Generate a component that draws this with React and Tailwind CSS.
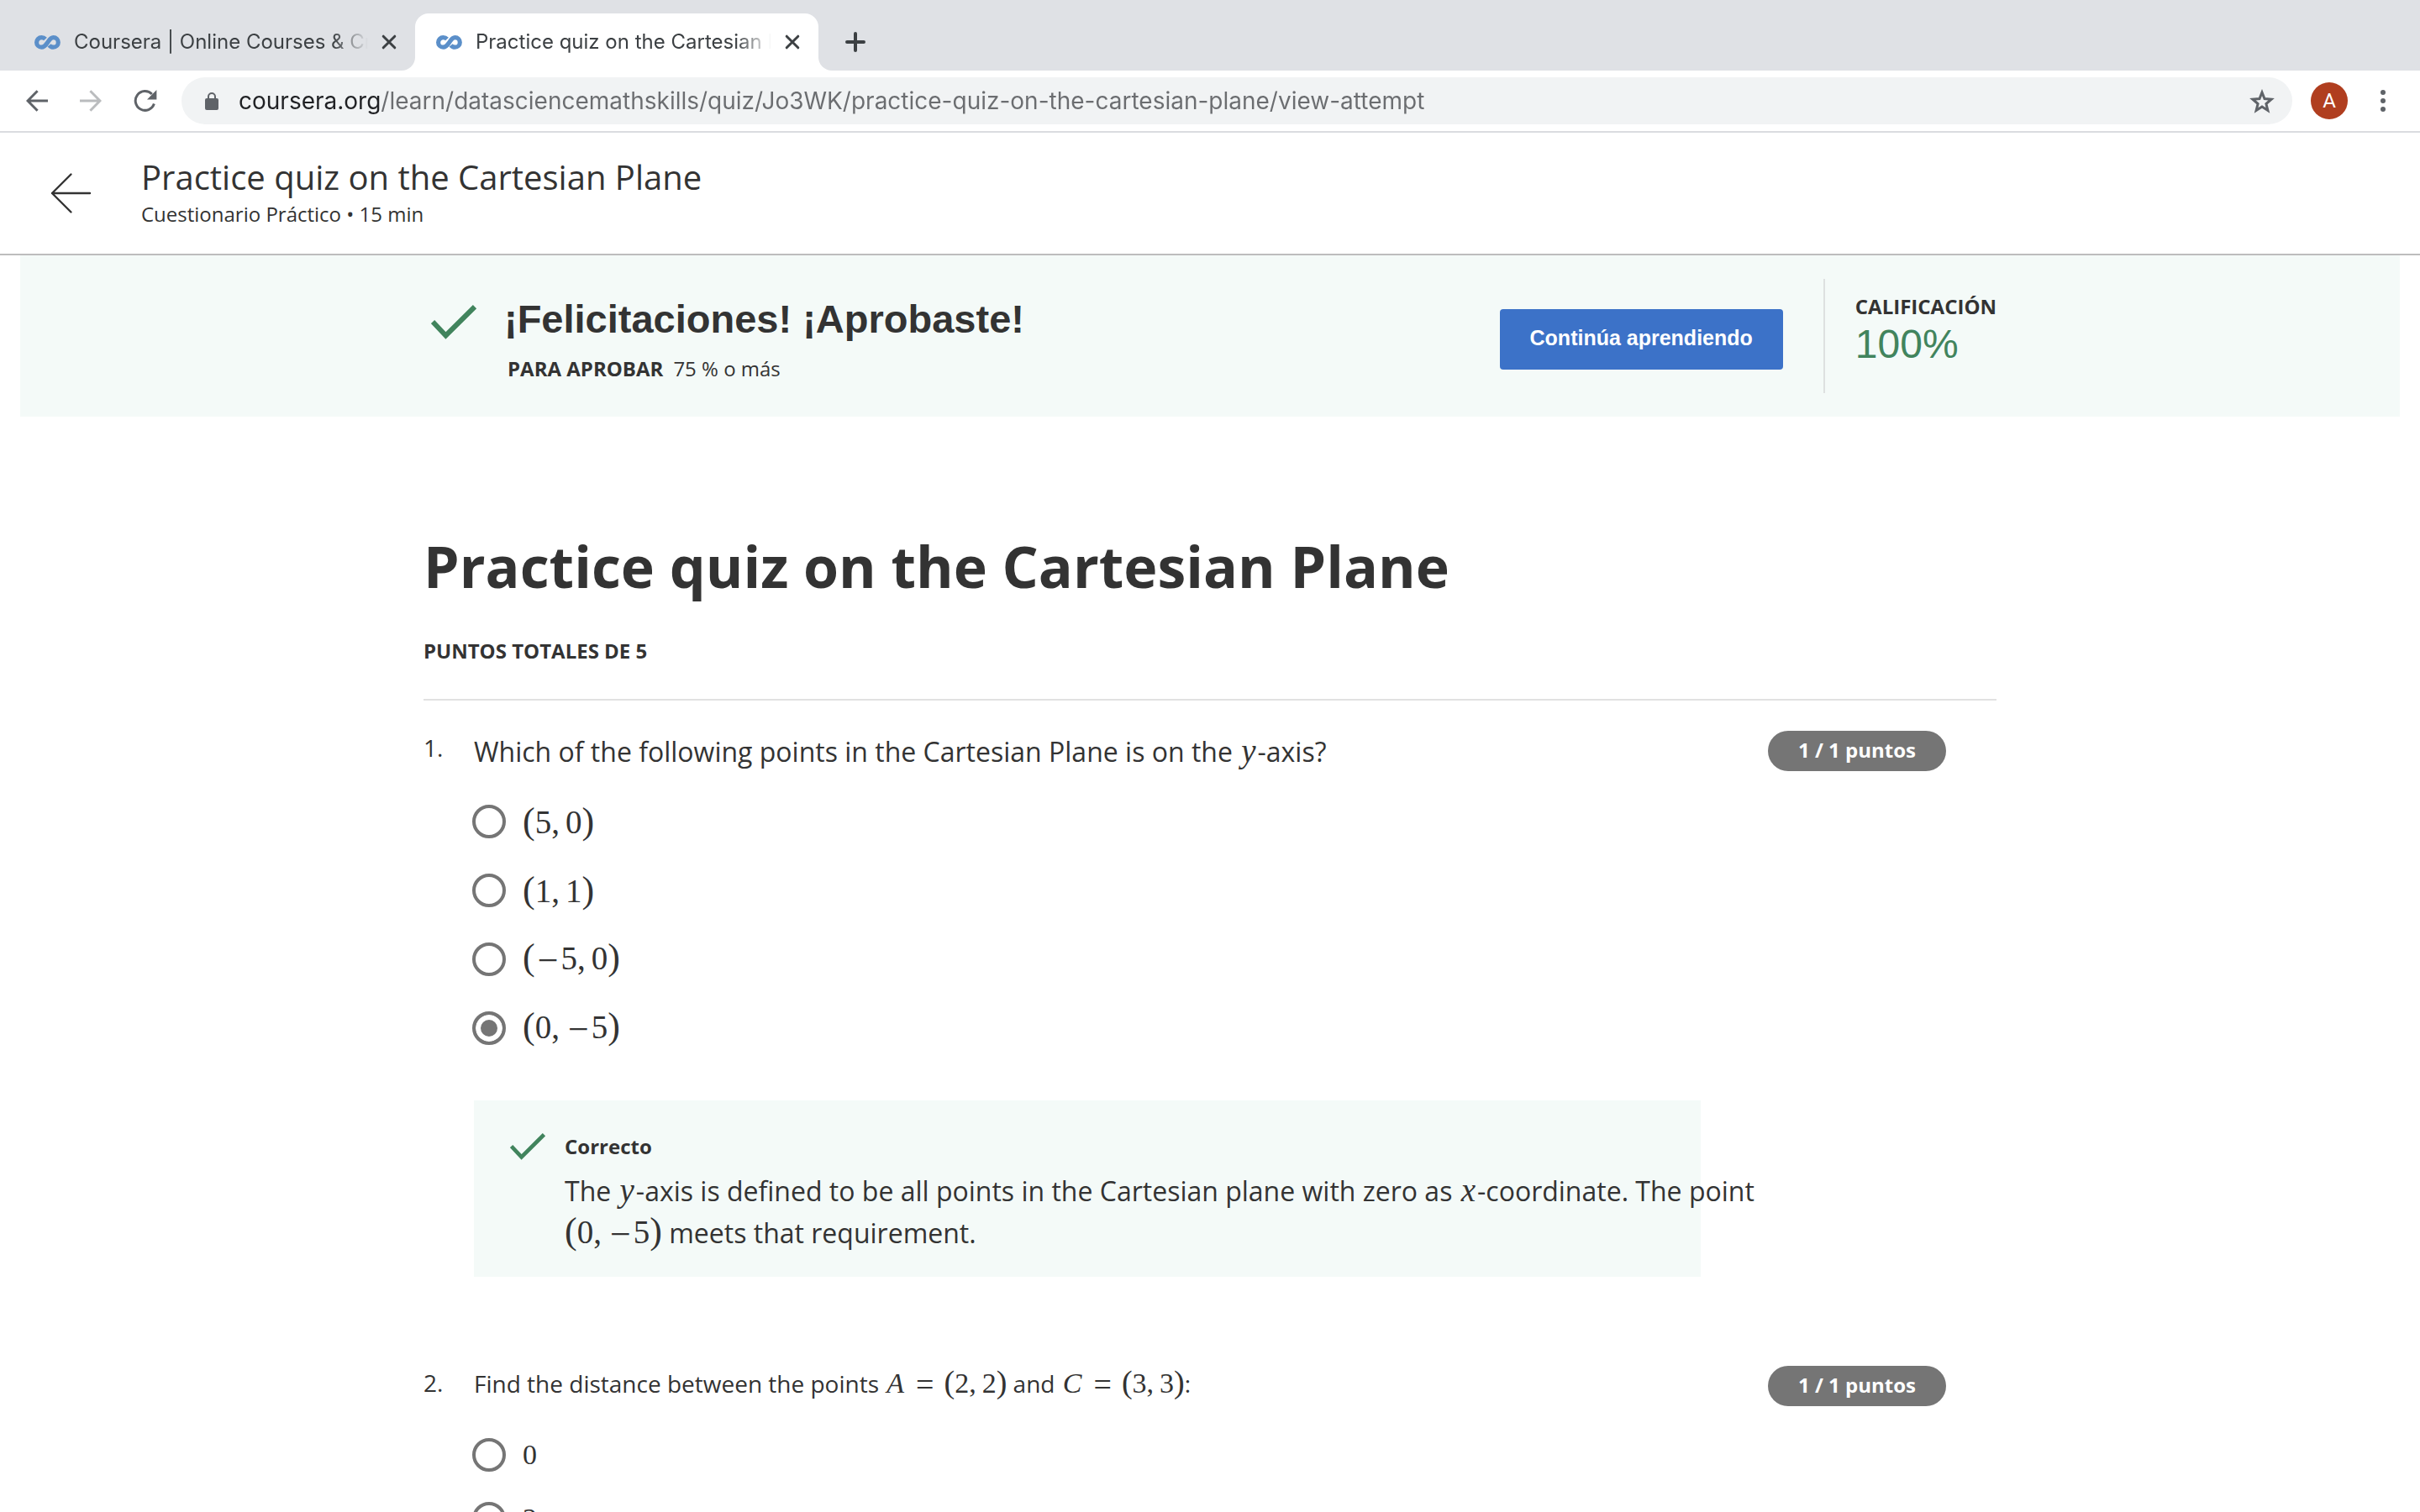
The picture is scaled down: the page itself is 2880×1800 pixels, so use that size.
import React from "react";

const svgProps = { fill: "none", stroke: "currentColor", "aria-hidden": true };

function CourseraMark() {
  return (
    <svg {...svgProps} viewBox="0 0 31 17" className="h-[17px] w-[31px] shrink-0 text-[#5b8fc9]" strokeWidth="5.2">
      <path d="M13 4.4C11.8 3.1 10.2 2.6 8.400 2.6a5.800 5.800 0 0 0 0 11.600c3.400 0 5-2.200 7.100-5.400S19 2.600 22.500 2.600a5.800 5.800 0 0 1 0 11.600c-2 0-3.700-.9-4.900-2.400" />
    </svg>
  );
}

function CloseIcon() {
  return (
    <svg {...svgProps} viewBox="0 0 18 18" className="size-[18px]" strokeWidth="3" strokeLinecap="round">
      <path d="M2.2 2.2l13.6 13.6M15.8 2.2L2.2 15.8" />
    </svg>
  );
}

function ArrowIcon({ className = "" }) {
  return (
    <svg {...svgProps} viewBox="0 0 26 26" className={`size-[26px] ${className}`} strokeWidth="3">
      <path d="M26 13H2.5M13.6 1.2L2 13l11.6 11.8" />
    </svg>
  );
}

function ReloadIcon() {
  return (
    <svg viewBox="0 0 28 26" className="h-[26px] w-[28px]" fill="none" aria-hidden="true">
      <path d="M21.8 5A11.4 11.4 0 1 0 24.4 16.6" stroke="currentColor" strokeWidth="3" />
      <path d="M27.4 0v11.4H16z" fill="currentColor" />
    </svg>
  );
}

function LockIcon() {
  return (
    <svg viewBox="0 0 16 21" className="h-[21px] w-[16px] shrink-0 text-[#5f6368]" fill="none" aria-hidden="true">
      <rect y="7" width="16" height="14" rx="2" fill="currentColor" />
      <path d="M4 8V5a4 4 0 0 1 8 0v3" stroke="currentColor" strokeWidth="2" />
    </svg>
  );
}

function StarIcon() {
  return (
    <svg {...svgProps} viewBox="0 0 30 29" className="h-[29px] w-[30px]" strokeWidth="3">
      <path d="M15 4l3 7.6 8.1.6-6.2 5.3 2 7.9L15 21.1l-6.9 4.3 2-7.9-6.2-5.3 8.1-.6z" />
    </svg>
  );
}

function CheckIcon({ className }) {
  return (
    <svg {...svgProps} viewBox="0 0 54 41" className={`shrink-0 text-[#41845d] ${className}`} strokeWidth="6">
      <path d="M2 20l15.5 16.5L52 2.2" />
    </svg>
  );
}

function Tab({ title }) {
  return (
    <div className="flex h-full w-full items-center pr-[22px] text-2xl leading-8">
      <CourseraMark />
      <span className="ml-4 min-w-0 flex-1 overflow-hidden whitespace-nowrap text-[#3c4043] [mask-image:linear-gradient(to_right,black_88%,transparent)]">
        {title}
      </span>
      <button aria-label={`Close ${title}`} className="ml-4 shrink-0 text-[#3c4043]">
        <CloseIcon />
      </button>
    </div>
  );
}

function Browser() {
  return (
    <header className="shrink-0 border-b-2 border-[#dadce0] bg-white font-['Inter',sans-serif]">
      <div className="flex h-[84px]">
        <div className="w-[494px] rounded-br-2xl bg-[#dfe1e5] pt-4 pl-[41px]">
          <Tab title="Coursera | Online Courses & Cr" />
        </div>
        <div className="w-[480px] bg-[#dfe1e5] pt-4">
          <div className="h-full rounded-t-2xl bg-white pl-[25px]">
            <Tab title="Practice quiz on the Cartesian Plane" />
          </div>
        </div>
        <div className="flex flex-1 items-center rounded-bl-2xl bg-[#dfe1e5] pt-4 pl-8">
          <button aria-label="New tab" className="text-[#3c4043]">
            <svg {...svgProps} viewBox="0 0 24 24" className="size-6" strokeWidth="4" strokeLinecap="round">
              <path d="M12 2v20M2 12h20" />
            </svg>
          </button>
        </div>
      </div>
      <div className="flex h-[72px] items-center pr-[41px] pl-[31px]">
        <button aria-label="Back" className="mr-[38px] text-[#5f6368]">
          <ArrowIcon />
        </button>
        <button aria-label="Forward" className="mr-[38px] text-[#babcbe]">
          <ArrowIcon className="rotate-180" />
        </button>
        <button aria-label="Reload" className="mr-[29px] text-[#5f6368]">
          <ReloadIcon />
        </button>
        <div className="flex h-14 flex-1 items-center rounded-full bg-[#f1f3f4] pr-[21px] pl-7">
          <LockIcon />
          <input
            aria-label="Address"
            defaultValue="coursera.org/learn/datasciencemathskills/quiz/Jo3WK/practice-quiz-on-the-cartesian-plane/view-attempt"
            className="ml-6 h-10 flex-1 bg-linear-[to_right,#202124_168px,#6b6d70_168px] bg-clip-text text-[28px] text-transparent outline-none"
          />
          <button aria-label="Bookmark this page" className="text-[#5f6368]">
            <StarIcon />
          </button>
        </div>
        <button
          aria-label="Profile"
          className="ml-[22px] size-11 rounded-full bg-[#b03e1f] font-['Roboto',sans-serif] text-2xl text-white"
        >
          A
        </button>
        <button aria-label="Menu" className="ml-[39px] text-[#5f6368]">
          <svg viewBox="0 0 6 26" className="h-[26px] w-[6px]" fill="currentColor" aria-hidden="true">
            <circle cx="3" cy="3" r="3" />
            <circle cx="3" cy="13" r="3" />
            <circle cx="3" cy="23" r="3" />
          </svg>
        </button>
      </div>
    </header>
  );
}

/* Inline maths: letters are italic, commas carry a thin space, operators sit on the maths axis and, like brackets, are drawn larger. */
function Math({ children, className = "text-[39px]", big = "text-[44px]" }) {
  return (
    <span className={`font-['Liberation_Serif',serif] leading-none whitespace-nowrap ${className}`}>
      {children.split("").map((c, i) => {
        if (c === ",") return <span key={i} className="mr-[7px]">,</span>;
        if (c === "−") return <span key={i} className={`mx-[3px] align-[-0.08em] leading-none ${big}`}>−</span>;
        if (c === "=") return <span key={i} className={`mx-3 align-[-0.08em] leading-none ${big}`}>=</span>;
        if (c === "(" || c === ")") return <span key={i} className={`leading-none ${big}`}>{c}</span>;
        if (/[A-Z]/.test(c)) return <i key={i} className="mx-0.5">{c}</i>;
        if (/[a-z]/.test(c)) return <i key={i} className="mx-0.5">{c}</i>;
        return c;
      })}
    </span>
  );
}

function Small({ children }) {
  return (
    <Math className="text-[34px]" big="text-[38px]">
      {children}
    </Math>
  );
}

function Option({ name, checked, children }) {
  return (
    <label className="flex h-10 items-center gap-5">
      <input
        type="radio"
        name={name}
        defaultChecked={checked}
        className="size-10 shrink-0 appearance-none rounded-full border-4 border-[#757575] bg-white checked:bg-[#757575] checked:shadow-[inset_0_0_0_6px_white]"
      />
      {children}
    </label>
  );
}

function Points() {
  return (
    <span className="mr-[60px] flex h-12 w-[212px] shrink-0 items-center justify-center rounded-full bg-[#757575] pb-0.5 text-2xl font-bold text-white">
      1 / 1 puntos
    </span>
  );
}

export default function App() {
  return (
    <div className="flex h-screen flex-col overflow-hidden bg-white font-['Open_Sans',sans-serif] text-[#333]">
      <Browser />

      <header className="flex h-[146px] shrink-0 items-center border-b-2 border-[#bdbdbd] pl-[60px]">
        <a href="#" aria-label="Volver" className="mr-[58px]">
          <svg {...svgProps} viewBox="0 0 50 50" className="size-[50px]" strokeWidth="2.4" strokeLinecap="round" strokeLinejoin="round">
            <path d="M47 25H2M24.5 2.5L2 25l22.500 22.500" />
          </svg>
        </a>
        <div className="pb-0.5">
          <p className="text-[40px] leading-[48px]">Practice quiz on the Cartesian Plane</p>
          <p className="mt-1 text-2xl leading-8">Cuestionario Práctico • 15 min</p>
        </div>
      </header>

      <main className="min-h-0 flex-1 overflow-hidden">
        <section className="mx-6 h-48 bg-[#f4faf8]">
          <div className="mx-auto flex h-full max-w-[1872px]">
            <CheckIcon className="mt-[59px] ml-[9px] h-[41px] w-[54px]" />
            <div className="ml-[33px] flex-1 pt-12">
              <h2 className="font-['Liberation_Sans',sans-serif] text-[47px] leading-[56px] font-bold">¡Felicitaciones! ¡Aprobaste!</h2>
              <p className="mt-[15px] pl-1 text-2xl leading-8">
                <b className="mr-3">PARA APROBAR</b>75 % o más
              </p>
            </div>
            <button className="mt-16 h-[72px] rounded-sm bg-[#3c72c8] px-9 pb-0.5 font-['Liberation_Sans',sans-serif] text-[25px] font-bold text-white">
              Continúa aprendiendo
            </button>
            <div className="mt-7 ml-12 h-[136px] border-l-2 border-[#dde1e0] pt-[17px] pl-9">
              <p className="text-2xl leading-8 font-bold">CALIFICACIÓN</p>
              <p className="font-['Liberation_Sans',sans-serif] text-5xl leading-[58px] text-[#41845d]">100%</p>
            </div>
          </div>
        </section>

        <div className="mx-auto max-w-[1872px] pt-[130px]">
          <h1 className="text-[68px] leading-[96px] font-bold">Practice quiz on the Cartesian Plane</h1>
          <p className="mt-[37px] border-b-2 border-[#e1e1e1] pb-[41px] text-2xl leading-8 font-bold">PUNTOS TOTALES DE 5</p>

          <ol>
            <li className="flex items-start pt-9">
              <span className="w-[60px] shrink-0 text-[28px] leading-10">1.</span>
              <div className="flex-1">
                <p className="text-[32px] leading-[50px]">
                  Which of the following points in the Cartesian Plane is on the <Math>y</Math>-axis?
                </p>
                <div className="-ml-0.5 mt-[38px] flex flex-col gap-[42px]">
                  <Option name="q1"><Math>(5,0)</Math></Option>
                  <Option name="q1"><Math>(1,1)</Math></Option>
                  <Option name="q1"><Math>(−5,0)</Math></Option>
                  <Option name="q1" checked><Math>(0,−5)</Math></Option>
                </div>
                <div className="mt-[66px] mr-20 flex max-w-[1460px] bg-[#f4faf8] pt-[39px] pb-[27px] pl-[43px]">
                  <CheckIcon className="mr-[23px] h-8 w-[42px]" />
                  <div className="min-w-0 flex-1 whitespace-nowrap">
                    <p className="text-2xl leading-8 font-bold">Correcto</p>
                    <p className="mt-3 text-[32px] leading-[50px]">
                      The <Math>y</Math>-axis is defined to be all points in the Cartesian plane with zero as <Math>x</Math>-coordinate. The point
                      <br />
                      <Math>(0,−5)</Math> meets that requirement.
                    </p>
                  </div>
                </div>
              </div>
              <Points />
            </li>

            <li className="flex items-start pt-[106px]">
              <span className="w-[60px] shrink-0 text-[28px] leading-10">2.</span>
              <div className="flex-1">
                <p className="text-[28px] leading-10">
                  Find the distance between the points <Small>A=(2,2)</Small> and <Small>C=(3,3)</Small>:
                </p>
                <div className="-ml-0.5 mt-[45px] flex flex-col gap-9">
                  <Option name="q2"><Small>0</Small></Option>
                  <Option name="q2"><Small>2</Small></Option>
                </div>
              </div>
              <Points />
            </li>
          </ol>
        </div>
      </main>
    </div>
  );
}
